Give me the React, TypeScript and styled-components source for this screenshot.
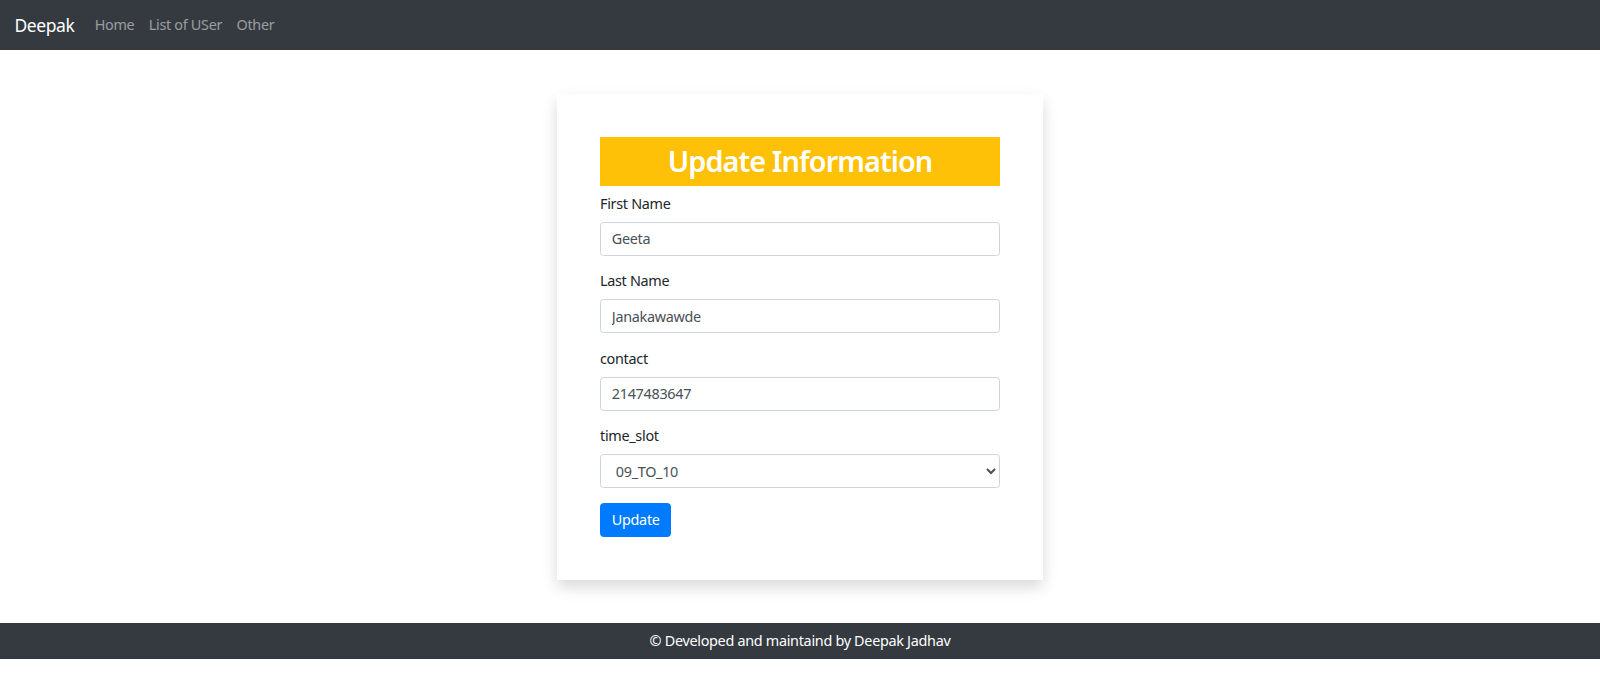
import React from "react";
import styled, { createGlobalStyle } from "styled-components";

const Global = createGlobalStyle`
  html, body { margin: 0; padding: 0; background: #fff; }
  body {
    font-family: "Noto Sans", "Open Sans", Arial, sans-serif;
    font-size: 14.4px;
    line-height: 1.5;
    color: #212529;
    letter-spacing: -0.3px;
  }
  * { box-sizing: border-box; }
`;

const Navbar = styled.nav`
  display: flex;
  align-items: center;
  background: #343a40;
  padding: 7.2px 14.4px;
  height: 50px;
`;

const Brand = styled.a`
  color: #fff;
  font-size: 17.5px;
  line-height: 27px;
  margin-right: 13px;
  text-decoration: none;
  letter-spacing: -0.4px;
`;

const NavList = styled.div`
  display: flex;
`;

const NavLink = styled.a`
  color: rgba(255, 255, 255, 0.5);
  padding: 7.2px 7.2px;
  text-decoration: none;
  font-size: 14.4px;
`;

const Main = styled.main`
  display: flex;
  justify-content: center;
  padding: 44px 0 43px;
`;

const Card = styled.div`
  width: 486px;
  background: #fff;
  padding: 43px;
  box-shadow: 0 7.2px 14.4px rgba(0, 0, 0, 0.15);
`;

const Heading = styled.h2`
  margin: 0 0 7.2px;
  background: #ffc107;
  color: #fff;
  text-align: center;
  font-size: 28.8px;
  line-height: 1.2;
  font-weight: 600;
  letter-spacing: -0.9px;
  padding: 7.2px 0;
`;

const Group = styled.div`
  margin-bottom: 14.4px;
  display: flex;
  flex-direction: column;
`;

const Label = styled.label`
  margin-bottom: 7.2px;
  font-size: 14.4px;
  line-height: 21.6px;
  color: #212529;
`;

const Input = styled.input`
  height: 34.2px;
  width: 100%;
  padding: 5.4px 10.8px;
  font-family: inherit;
  font-size: 14.4px;
  letter-spacing: -0.3px;
  color: #495057;
  border: 1px solid #ced4da;
  border-radius: 3.6px;
  background: #fff;
  outline: none;
`;

const Select = styled.select`
  height: 34.2px;
  width: 100%;
  padding: 5.4px 8px 5.4px 10.8px;
  font-family: inherit;
  font-size: 14.4px;
  letter-spacing: -0.3px;
  color: #495057;
  border: 1px solid #ced4da;
  border-radius: 3.6px;
  background: #fff;
  outline: none;
`;

const Button = styled.button`
  align-self: flex-start;
  background: #007bff;
  color: #fff;
  border: 1px solid #007bff;
  border-radius: 3.6px;
  padding: 5.4px 10.8px;
  font-family: inherit;
  font-size: 14.4px;
  letter-spacing: -0.3px;
  line-height: 21.6px;
  cursor: pointer;
`;

const Footer = styled.footer`
  background: #343a40;
  color: #fff;
  text-align: center;
  padding: 7px 0;
  font-size: 14.4px;
  line-height: 21.6px;
`;

const fields = [
  { label: "First Name", value: "Geeta" },
  { label: "Last Name", value: "Janakawawde" },
  { label: "contact", value: "2147483647" },
];

export default function App() {
  return (
    <>
      <Global />
      <Navbar>
        <Brand href="#">Deepak</Brand>
        <NavList>
          <NavLink href="#">Home</NavLink>
          <NavLink href="#">List of USer</NavLink>
          <NavLink href="#">Other</NavLink>
        </NavList>
      </Navbar>
      <Main>
        <Card>
          <Heading>Update Information</Heading>
          {fields.map((f) => (
            <Group key={f.label}>
              <Label>{f.label}</Label>
              <Input defaultValue={f.value} />
            </Group>
          ))}
          <Group>
            <Label>time_slot</Label>
            <Select defaultValue="09_TO_10">
              <option value="09_TO_10">09_TO_10</option>
              <option value="10_TO_11">10_TO_11</option>
              <option value="11_TO_12">11_TO_12</option>
            </Select>
          </Group>
          <Button>Update</Button>
        </Card>
      </Main>
      <Footer>© Developed and maintaind by Deepak Jadhav</Footer>
    </>
  );
}
